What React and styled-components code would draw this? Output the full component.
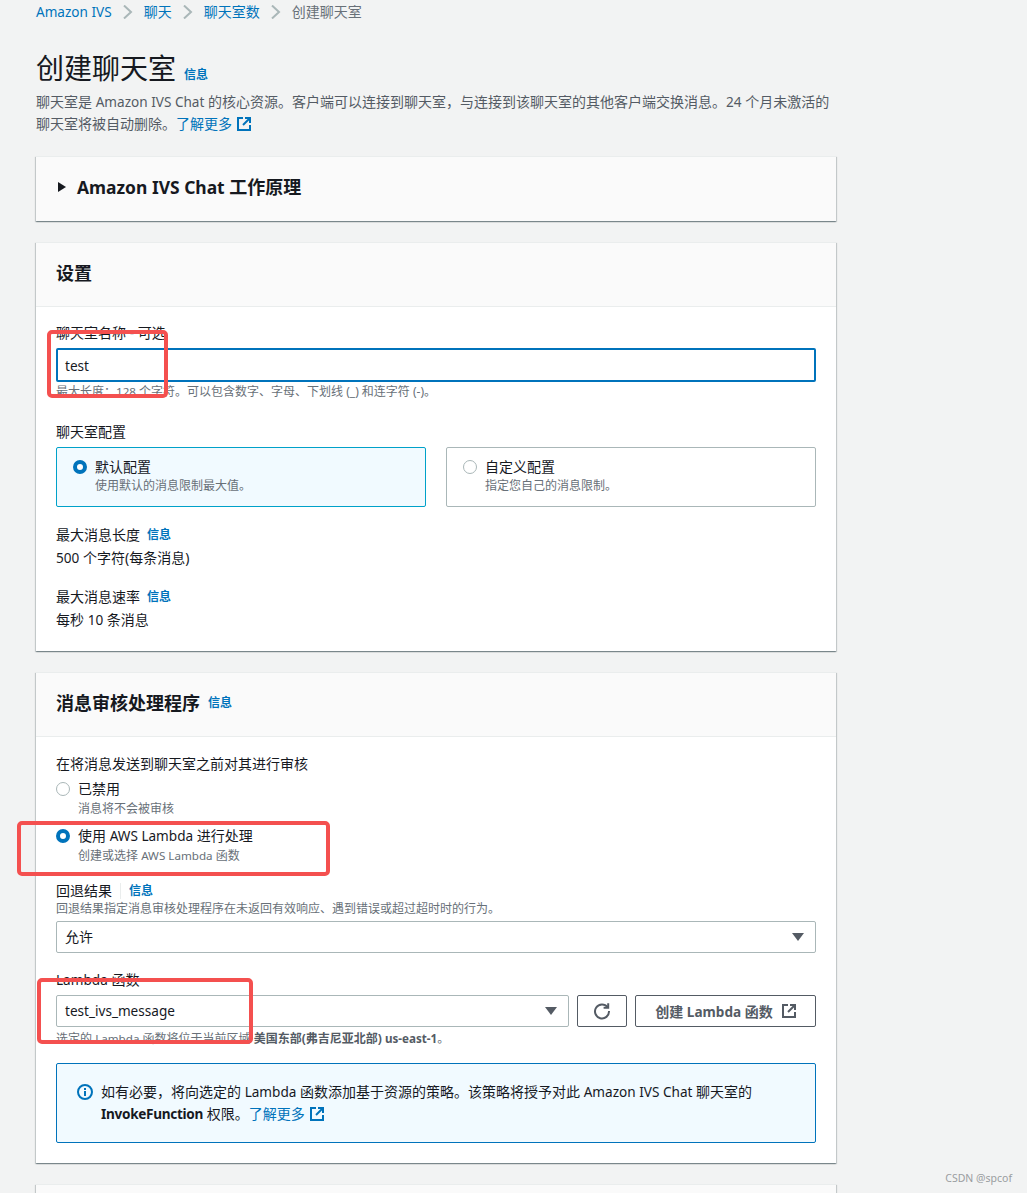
import React from "react";
import styled, { createGlobalStyle } from "styled-components";

const GlobalStyle = createGlobalStyle`
  html, body {
    margin: 0;
    padding: 0;
    background: #f2f3f3;
  }
  * {
    box-sizing: border-box;
  }
`;

const Page = styled.div`
  position: relative;
  width: 1027px;
  height: 1193px;
  overflow: hidden;
  padding: 0 191px 0 36px;
  background: #f2f3f3;
  color: #16191f;
  font-family: "Noto Sans", "Noto Sans CJK SC", sans-serif;
  font-size: 14px;
  line-height: 20px;
`;

/* latin runs sit a bit narrower than the cjk ones around them */
const En = styled.span`
  font-size: 0.97em;
`;

const Breadcrumbs = styled.nav`
  display: flex;
  align-items: center;
  height: 24px;
`;

const Crumb = styled.a`
  color: ${(p) => (p.$current ? "#687078" : "#0073bb")};
`;

const Chevron = styled.svg`
  width: 12px;
  height: 14px;
  margin: 0 10px;
  fill: none;
  stroke: #aab7b8;
  stroke-width: 2;
`;

const TitleRow = styled.div`
  display: flex;
  align-items: baseline;
  gap: 8px;
  margin-top: 24px;
`;

const Title = styled.h1`
  margin: 0;
  font-size: 28px;
  line-height: 40px;
  font-weight: 400;
`;

const Info = styled.a`
  color: #0073bb;
  font-size: 12px;
  font-weight: 700;
  line-height: 16px;
`;

const Description = styled.p`
  margin: 3px 0 0;
  width: 810px;
  color: #545b64;
  line-height: 22px;
`;

const Link = styled.a`
  color: #0073bb;
`;

const ExternalSvg = styled.svg`
  width: 14px;
  height: 14px;
  margin-left: ${(p) => p.$gap || 5}px;
  vertical-align: -2px;
  fill: none;
  stroke: ${(p) => p.$color || "#0073bb"};
  stroke-width: 2;
`;

const ExternalIcon = ({ color, gap }) => (
  <ExternalSvg viewBox="0 0 14 14" $color={color} $gap={gap}>
    <path d="M6 1H1v12h12V8" />
    <path d="M8 1h5v5" />
    <path d="M13 1L6 8" />
  </ExternalSvg>
);

const Card = styled.section`
  width: 800px;
  margin-top: 21px;
  background: #fff;
  border-top: 1px solid #eaeded;
  box-shadow: 0 1px 1px 0 rgba(0, 28, 36, 0.3), 1px 1px 1px 0 rgba(0, 28, 36, 0.15), -1px 1px 1px 0 rgba(0, 28, 36, 0.15);
`;

const CardHeader = styled.header`
  display: flex;
  align-items: center;
  gap: 8px;
  height: 64px;
  padding: 0 20px 4px;
  background: #fafafa;
  border-bottom: ${(p) => (p.$plain ? "none" : "1px solid #eaeded")};
`;

const CardTitle = styled.h2`
  margin: 0;
  font-size: 18px;
  line-height: 24px;
  font-weight: 700;
`;

const Caret = styled.span`
  width: 0;
  height: 0;
  margin: 0 3px 0 2px;
  border-left: 8px solid #16191f;
  border-top: 5px solid transparent;
  border-bottom: 5px solid transparent;
`;

const CardBody = styled.div`
  padding: ${(p) => p.$top || 16}px 20px ${(p) => p.$bottom || 20}px;
`;

const Label = styled.div`
  display: flex;
  align-items: center;
  line-height: 20px;
`;

const OptionLabel = styled.div`
  line-height: 20px;
`;

const LabelInfo = styled(Info)`
  margin-left: ${(p) => (p.$divided ? 8 : 7)}px;
  padding-left: ${(p) => (p.$divided ? 8 : 0)}px;
  border-left: ${(p) => (p.$divided ? "1px solid #eaeded" : "none")};
`;

const Hint = styled.div`
  color: #687078;
  font-size: 12px;
  line-height: 16px;
  margin-top: ${(p) => p.$top || 0}px;
`;

const Strong = styled.b`
  color: #545b64;
`;

const BoldName = styled.b`
  letter-spacing: -0.3px;
`;

const Input = styled.div`
  display: flex;
  align-items: center;
  height: 34px;
  margin-top: 5px;
  padding: 2px 7px 0;
  background: #fff;
  border: 2px solid #0073bb;
  border-radius: 2px;
`;

const Select = styled.div`
  flex: 1;
  display: flex;
  align-items: center;
  justify-content: space-between;
  height: 32px;
  padding: 0 11px 0 8px;
  border: 1px solid #aab7b8;
  border-radius: 2px;
  background: #fff;
`;

const SelectArrow = styled.span`
  width: 0;
  height: 0;
  border-top: 8px solid #545b64;
  border-left: 6px solid transparent;
  border-right: 6px solid transparent;
`;

const TileRow = styled.div`
  display: grid;
  grid-template-columns: 370px 370px;
  gap: 20px;
  margin-top: 5px;
`;

const Tile = styled.div`
  display: flex;
  gap: 8px;
  height: 60px;
  padding: 9px 16px;
  border: 1px solid ${(p) => (p.$active ? "#00a1c9" : "#aab7b8")};
  border-radius: 2px;
  background: ${(p) => (p.$active ? "#f1faff" : "#fff")};
`;

const Radio = styled.span`
  flex: none;
  width: 14px;
  height: 14px;
  margin-top: 3px;
  border-radius: 50%;
  background: #fff;
  border: ${(p) => (p.$on ? "4px solid #0073bb" : "1px solid #aab7b8")};
`;

const Field = styled.div`
  margin-top: ${(p) => p.$top || 0}px;
`;

const Value = styled.div`
  margin-top: 3px;
`;

const RadioRow = styled.div`
  display: flex;
  gap: 8px;
  margin-top: ${(p) => p.$top || 0}px;
`;

const ControlRow = styled.div`
  display: flex;
  gap: 8px;
  margin-top: ${(p) => p.$top || 5}px;
`;

const Button = styled.button`
  display: flex;
  align-items: center;
  justify-content: center;
  width: ${(p) => p.$width}px;
  height: 32px;
  padding: 0;
  background: #fff;
  border: 1px solid #545b64;
  border-radius: 2px;
  color: #545b64;
  font-family: inherit;
  font-size: 14px;
  font-weight: 700;
`;

const Alert = styled.div`
  display: flex;
  gap: 8px;
  height: 80px;
  margin-top: 16px;
  padding: 17px 20px;
  border: 1px solid #0073bb;
  border-radius: 2px;
  background: #f1faff;
  line-height: 22px;
`;

const AlertIcon = styled.svg`
  flex: none;
  width: 16px;
  height: 16px;
  margin-top: 3px;
`;

const RefreshIcon = styled.svg`
  width: 18px;
  height: 18px;
  fill: none;
  stroke: #545b64;
  stroke-width: 2;
`;

const Annotation = styled.div`
  position: absolute;
  left: ${(p) => p.$x}px;
  top: ${(p) => p.$y}px;
  width: ${(p) => p.$w}px;
  height: ${(p) => p.$h}px;
  border: 4px solid #f4504f;
  border-radius: 5px;
`;

const Watermark = styled.div`
  position: absolute;
  right: 15px;
  bottom: 8px;
  color: #9a9d9f;
  font-size: 10.5px;
  line-height: 14px;
`;

const Sep = () => (
  <Chevron viewBox="0 0 12 14">
    <path d="M2 .5l7 6.5-7 6.5" />
  </Chevron>
);

export default function App() {
  return (
    <Page>
      <GlobalStyle />
      <Breadcrumbs>
        <Crumb><En>Amazon IVS</En></Crumb>
        <Sep />
        <Crumb>聊天</Crumb>
        <Sep />
        <Crumb>聊天室数</Crumb>
        <Sep />
        <Crumb $current>创建聊天室</Crumb>
      </Breadcrumbs>

      <TitleRow>
        <Title>创建聊天室</Title>
        <Info>信息</Info>
      </TitleRow>
      <Description>
        聊天室是 <En>Amazon IVS Chat</En> 的核心资源。客户端可以连接到聊天室，与连接到该聊天室的其他客户端交换消息。<En>24</En> 个月未激活的
        <br />
        聊天室将被自动删除。
        <Link>了解更多</Link>
        <ExternalIcon />
      </Description>

      <Card>
        <CardHeader $plain>
          <Caret />
          <CardTitle><En>Amazon IVS Chat</En> 工作原理</CardTitle>
        </CardHeader>
      </Card>

      <Card>
        <CardHeader>
          <CardTitle>设置</CardTitle>
        </CardHeader>
        <CardBody $bottom={21}>
          <Label>聊天室名称 - 可选</Label>
          <Input><En>test</En></Input>
          <Hint $top={2}>最大长度：<En>128</En> 个字符。可以包含数字、字母、下划线 (_) 和连字符 (-)。</Hint>

          <Field $top={22}>
            <Label>聊天室配置</Label>
            <TileRow>
              <Tile $active>
                <Radio $on />
                <div>
                  <Label>默认配置</Label>
                  <Hint $top={1}>使用默认的消息限制最大值。</Hint>
                </div>
              </Tile>
              <Tile>
                <Radio />
                <div>
                  <Label>自定义配置</Label>
                  <Hint $top={1}>指定您自己的消息限制。</Hint>
                </div>
              </Tile>
            </TileRow>
          </Field>

          <Field $top={18}>
            <Label>
              最大消息长度
              <LabelInfo>信息</LabelInfo>
            </Label>
            <Value><En>500</En> 个字符(每条消息)</Value>
          </Field>
          <Field $top={19}>
            <Label>
              最大消息速率
              <LabelInfo>信息</LabelInfo>
            </Label>
            <Value>每秒 <En>10</En> 条消息</Value>
          </Field>
        </CardBody>
      </Card>

      <Card>
        <CardHeader>
          <CardTitle>消息审核处理程序</CardTitle>
          <Info>信息</Info>
        </CardHeader>
        <CardBody $top={17}>
          <Label>在将消息发送到聊天室之前对其进行审核</Label>
          <RadioRow $top={5}>
            <Radio />
            <div>
              <Label>已禁用</Label>
              <Hint $top={2}>消息将不会被审核</Hint>
            </div>
          </RadioRow>
          <RadioRow $top={9}>
            <Radio $on />
            <div>
              <OptionLabel>使用 <En>AWS Lambda</En> 进行处理</OptionLabel>
              <Hint $top={2}>创建或选择 <En>AWS Lambda</En> 函数</Hint>
            </div>
          </RadioRow>

          <Field $top={17}>
            <Label>
              回退结果
              <LabelInfo $divided>信息</LabelInfo>
            </Label>
            <Hint>回退结果指定消息审核处理程序在未返回有效响应、遇到错误或超过超时时的行为。</Hint>
            <ControlRow $top={4}>
              <Select>
                允许
                <SelectArrow />
              </Select>
            </ControlRow>
          </Field>

          <Field $top={17}>
            <OptionLabel><En>Lambda</En> 函数</OptionLabel>
            <ControlRow>
              <Select>
                <En>test_ivs_message</En>
                <SelectArrow />
              </Select>
              <Button $width={50}>
                <RefreshIcon viewBox="0 0 18 18">
                  <path d="M14.6 5.2A7 7 0 1 0 16 9" />
                  <path d="M15.2 1.2v4.6h-4.6" />
                </RefreshIcon>
              </Button>
              <Button $width={181}>
                <span>创建 <En>Lambda</En> 函数</span>
                <ExternalIcon color="#545b64" gap={9} />
              </Button>
            </ControlRow>
            <Hint $top={4}>
              选定的 <En>Lambda</En> 函数将位于当前区域 <Strong>美国东部(弗吉尼亚北部) <En>us-east-1</En></Strong>。
            </Hint>
          </Field>

          <Alert>
            <AlertIcon viewBox="0 0 16 16">
              <circle cx="8" cy="8" r="7" fill="none" stroke="#0073bb" strokeWidth="2" />
              <rect x="7" y="7" width="2" height="5" fill="#0073bb" />
              <rect x="7" y="4" width="2" height="2" fill="#0073bb" />
            </AlertIcon>
            <div>
              如有必要，将向选定的 <En>Lambda</En> 函数添加基于资源的策略。该策略将授予对此 <En>Amazon IVS Chat</En> 聊天室的
              <br />
              <BoldName><En>InvokeFunction</En></BoldName> 权限。<Link>了解更多</Link>
              <ExternalIcon />
            </div>
          </Alert>
        </CardBody>
      </Card>

      <Card>
        <CardHeader />
      </Card>

      <Annotation $x={47} $y={330} $w={121} $h={68} />
      <Annotation $x={17} $y={821} $w={313} $h={55} />
      <Annotation $x={37} $y={978} $w={216} $h={66} />
      <Watermark>CSDN @spcof</Watermark>
    </Page>
  );
}
